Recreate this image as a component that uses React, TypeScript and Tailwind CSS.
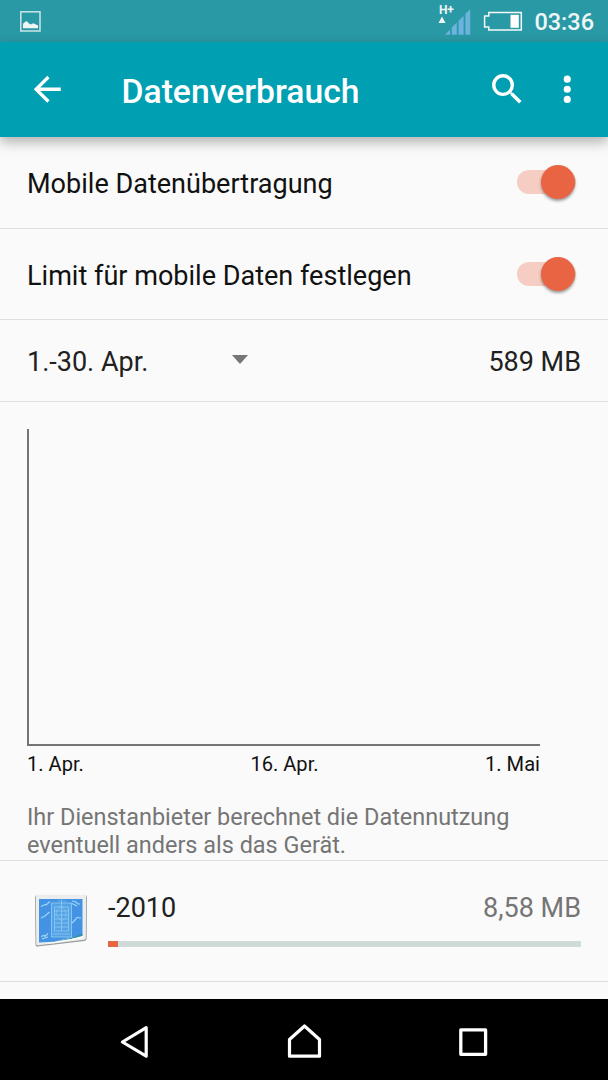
import React from "react";

function StatusBar() {
  return (
    <div className="flex h-[42px] shrink-0 items-center justify-between bg-[#2999a5] pl-5 pr-[14px]">
      <svg width="21" height="21" viewBox="0 0 21 21">
        <rect x="0.8" y="0.8" width="19.2" height="19.2" fill="none" stroke="#c3e0e3" strokeWidth="1.6" />
        <path d="M3 17.3v-4.5l2-1.8 1.5-1 2 2 2 1.5 3-1.2 2.5 1.2 2 1v2.8z" fill="#f1f5f5" />
      </svg>
      <div className="flex items-center">
        <svg width="88" height="42" viewBox="0 0 88 42" className="mr-[11px]">
          <path d="M3.5 23h7L7 16.5z" fill="#eef5f5" />
          <text x="3.9" y="14.2" fontFamily="Roboto, sans-serif" fontSize="12" fontWeight="700" fill="#eef5f5">H+</text>
          <path d="M10 34.8l5-5v5zM16.8 34.8v-7.2l5-5v12.2zM23.6 34.8V20.8l5-5v19zM30.4 34.8V14l4.8-4.8v25.6z" fill="#6cb3de" />
          <path d="M53.8 12.6h32.5v17.5H53.8v-3.2h-4.2V16h4.2z" fill="none" stroke="#f5f9f9" strokeWidth="1.5" />
          <path d="M75.5 14.8h8.3v13h-8.3z" fill="#fff" />
        </svg>
        <span className="mt-1 text-[23.5px] font-medium leading-none text-[#eef6f7]">03:36</span>
      </div>
    </div>
  );
}

function AppBar() {
  return (
    <header className="relative z-10 flex h-[95px] shrink-0 items-center bg-[#009fb2] px-[27px] shadow-[0_5px_12px_rgba(0,0,0,0.3)]">
      <svg width="40.5" height="40.5" viewBox="0 0 24 24" fill="#fff">
        <path d="M20 11H7.83l5.59-5.59L12 4l-8 8 8 8 1.41-1.41L7.83 13H20z" />
      </svg>
      <h1 className="ml-[54px] mt-1 flex-1 text-[33.7px] font-medium leading-10 text-white">Datenverbrauch</h1>
      <svg width="40.5" height="40.5" viewBox="0 0 24 24" fill="#fff">
        <path d="M15.5 14h-.79l-.28-.27A6.47 6.47 0 0 0 16 9.5 6.5 6.5 0 1 0 9.5 16c1.61 0 3.09-.59 4.23-1.57l.27.28v.79l5 4.99L20.49 19zm-6 0a4.5 4.5 0 1 1 0-9 4.5 4.5 0 0 1 0 9z" />
      </svg>
      <svg width="40.5" height="40.5" viewBox="0 0 24 24" fill="#fff" className="-mr-[6.5px] ml-5">
        <circle cx="12" cy="6" r="2.1" />
        <circle cx="12" cy="12" r="2.1" />
        <circle cx="12" cy="18" r="2.1" />
      </svg>
    </header>
  );
}

function SwitchRow({ label, className }: { label: string; className: string }) {
  return (
    <div className={`flex shrink-0 items-center justify-between border-b border-[#dedede] pl-[27px] pr-8 ${className}`}>
      <span className="mt-[3px] text-[27.05px] leading-8 text-[#111]">{label}</span>
      <div className="mb-px flex h-6 w-[59px] items-center justify-end rounded-full bg-[#f6cdc3]">
        <div className="mr-px size-[34px] shrink-0 rounded-full bg-[#e96443] shadow-[0_2px_3px_rgba(0,0,0,0.38)]" />
      </div>
    </div>
  );
}

function AppIcon() {
  return (
    <svg width="54" height="54" viewBox="0 0 54 54">
      <path d="M3 1.2h48q2 0 2 2L52.6 45q0 1.6-2 2L3.5 52.6q-2 .3-2-2L1 3.2q0-2 2-2z" fill="#9a9d9d" />
      <path d="M3 .8h47.5q1.7 0 1.7 1.8L51.8 44q0 1.5-1.6 1.8L4 51.2q-1.6.2-1.7-1.5L1.8 2.4Q1.8.8 3 .8z" fill="#eceeee" />
      <path d="M5 5h43.5v36L20 47.8 5 48.5z" fill="#4492e4" />
      <path d="M17 48.5q16-2.5 31.5-8.7v3.2z" fill="#2b91a2" />
      <path d="M11 49.3q20-2 38-7.6v2.4L20 49.3z" fill="#fff" />
      <g fill="none" stroke="#9ed8f5">
        <path d="M17.5 9h20v34h-20z" fill="#5ba6e8" strokeWidth="0.9" opacity=".8" />
        <path d="M20.5 13h14v24h-14zM20.5 17h14m-14 4h14m-14 4h14m-14 4h14m-14 4h14M27.5 8v29M19 40h17" strokeWidth=".7" opacity=".85" />
        <path d="M27.5 4v5M23 7h9M23 16l4-4 4 4 1 7-4 4-4-3-2-4z" strokeWidth=".6" opacity=".7" />
        <path d="M7 12.5l4-2 1 .5 4-3.5M7 24l4-2 .5-.5 4-3.5M7 42.5l3-1 1 1 3-3M8 45l6-2M38 7l3 .5 3 2.5 2 0M38 9.5l5 2.5M38 29l4-4m0 0q1-3 3-1l2 0" strokeWidth="1.1" />
      </g>
    </svg>
  );
}

function NavBar() {
  return (
    <nav className="flex h-[81px] shrink-0 items-center justify-center gap-[133px] bg-black pt-[5px]">
      <svg width="36" height="40" viewBox="0 0 36 40" fill="none" stroke="#fff" strokeWidth="3.2" strokeLinejoin="round">
        <path d="M29.2 5.7v28.5L5.4 20z" />
      </svg>
      <svg width="36" height="40" viewBox="0 0 36 40" fill="none" stroke="#fff" strokeWidth="3.2" strokeLinejoin="round">
        <path d="M3.5 34.2V17.5l15-13.5 15 13.5v16.7z" />
      </svg>
      <svg width="36" height="40" viewBox="0 0 36 40" fill="none" stroke="#fff" strokeWidth="3.3" strokeLinejoin="round">
        <path d="M5.8 7.9h24.8v24.4H5.8z" />
      </svg>
    </nav>
  );
}

export default function App() {
  return (
    <div className="flex h-[1080px] w-[608px] flex-col overflow-hidden bg-[#fafafa] font-[Roboto,sans-serif]">
      <StatusBar />
      <AppBar />
      <main className="flex min-h-0 flex-1 flex-col">
        <SwitchRow label="Mobile Datenübertragung" className="h-[92px]" />
        <SwitchRow label="Limit für mobile Daten festlegen" className="h-[91px]" />
        <div className="flex h-[82px] shrink-0 items-center border-b border-[#dedede] px-[27px] text-[27px] leading-8 text-[#212121]">
          <span className="mt-[2px] w-[205px]">1.-30. Apr.</span>
          <svg width="16" height="9" viewBox="0 0 16 9" className="-mt-[2px]">
            <path d="M0 0h16L8 9z" fill="#757575" />
          </svg>
          <span className="ml-auto mt-[2px]">589 MB</span>
        </div>
        <section className="flex h-[459px] shrink-0 flex-col border-b border-[#dedede] px-[27px] pt-[27px]">
          <div className="h-[317px] w-[513px] shrink-0 border-b-2 border-l-2 border-[#757575]" />
          <div className="mt-[6px] flex w-[513px] justify-between text-[20.1px] leading-6 text-[#111]">
            <span>1. Apr.</span>
            <span>16. Apr.</span>
            <span>1. Mai</span>
          </div>
          <p className="mt-[27px] whitespace-nowrap text-[23.45px] leading-[28px] text-[#757575]">
            Ihr Dienstanbieter berechnet die Datennutzung
            <br />
            eventuell anders als das Gerät.
          </p>
        </section>
        <div className="flex h-[121px] shrink-0 border-b border-[#dedede] pl-[34px] pr-[27px]">
          <div className="mt-[33px]">
            <AppIcon />
          </div>
          <div className="ml-5 flex-1 pt-[31px]">
            <div className="flex justify-between text-[27px] leading-8">
              <span className="text-[#212121]">-2010</span>
              <span className="text-[#757575]">8,58 MB</span>
            </div>
            <div className="mt-[17px] h-[6px] bg-[#cfdad9]">
              <div className="h-full w-[10px] bg-[#e96443]" />
            </div>
          </div>
        </div>
      </main>
      <NavBar />
    </div>
  );
}
